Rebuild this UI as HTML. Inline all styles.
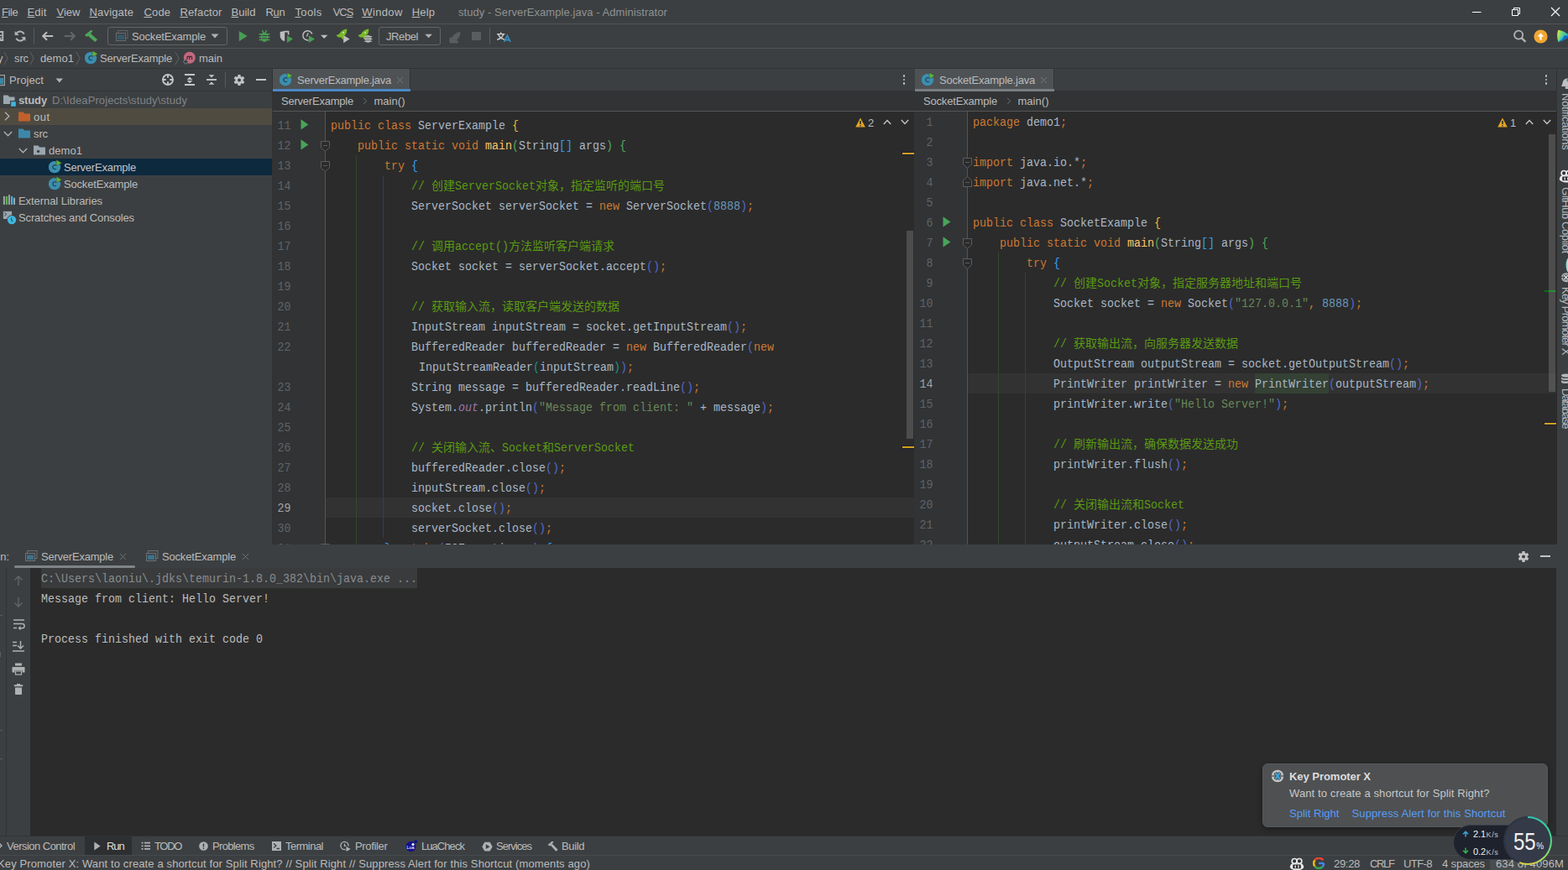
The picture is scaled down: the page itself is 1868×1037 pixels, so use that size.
<!DOCTYPE html>
<html><head><meta charset="utf-8"><title>study - ServerExample.java</title>
<style>
html,body{margin:0;padding:0;background:#3c3f41;}
body{width:1868px;height:1037px;position:relative;overflow:hidden;font-family:"Liberation Sans",sans-serif;font-size:13px;color:#bbb;}
#r{position:absolute;left:0;top:0;width:1868px;height:1037px;overflow:hidden;}
#r div,#r span,#r svg{position:absolute;white-space:pre;}
#r .cl{font-family:"Liberation Mono",monospace;font-size:13.333px;height:24px;line-height:24px;color:#a9b7c6;}
#r .cl span,#r .cl svg{position:static;}
#r .cl>span{display:inline-block;transform:scaleY(1.07);transform-origin:0 17px;}
#r .cl>span.c{transform:none}
#r .cl>span.c>span.t{display:inline-block;transform:scaleY(1.07);transform-origin:0 17px;}
#r .cl svg{display:inline-block;vertical-align:top;fill:#5a9a12;}
#r .cl span.j{display:inline-block;vertical-align:top;height:24px;line-height:22px;font-size:14px;font-family:"Liberation Mono","Noto Sans CJK SC",monospace;overflow:visible;}
.k{color:#cc7832}.s{color:#6a8759}.n{color:#6897bb}.c{color:#5a9a12}.f{color:#ffc66d}.o{color:#9876aa;font-style:italic}
.b1{color:#e8ba36}.b2{color:#54a857}.b3{color:#359ff4}.b4{color:#5468c8}.b5{color:#179387}
.sp{width:1px}
</style></head><body>
<div id="r">
<div style="left:0px;top:0px;width:1868px;height:1037px;background:#3c3f41;"></div>
<div style="left:0px;top:28px;width:1868px;height:1px;background:#515355;"></div>
<div style="left:0px;top:57px;width:1868px;height:1px;background:#515355;"></div>
<div style="left:0px;top:81px;width:1868px;height:1px;background:#323232;"></div>
<span style="left:2.0px;top:5.0px;height:20px;line-height:20px;font-size:13px;color:#bbbbbb;letter-spacing:-0.413px;"><u style="text-underline-offset:0.6px;text-decoration-thickness:1px">F</u>ile</span>
<span style="left:32.5px;top:5.0px;height:20px;line-height:20px;font-size:13px;color:#bbbbbb;letter-spacing:0.148px;"><u style="text-underline-offset:0.6px;text-decoration-thickness:1px">E</u>dit</span>
<span style="left:67.5px;top:5.0px;height:20px;line-height:20px;font-size:13px;color:#bbbbbb;letter-spacing:0.012px;"><u style="text-underline-offset:0.6px;text-decoration-thickness:1px">V</u>iew</span>
<span style="left:106.5px;top:5.0px;height:20px;line-height:20px;font-size:13px;color:#bbbbbb;letter-spacing:0.173px;"><u style="text-underline-offset:0.6px;text-decoration-thickness:1px">N</u>avigate</span>
<span style="left:171.5px;top:5.0px;height:20px;line-height:20px;font-size:13px;color:#bbbbbb;letter-spacing:0.130px;"><u style="text-underline-offset:0.6px;text-decoration-thickness:1px">C</u>ode</span>
<span style="left:214.5px;top:5.0px;height:20px;line-height:20px;font-size:13px;color:#bbbbbb;letter-spacing:0.107px;"><u style="text-underline-offset:0.6px;text-decoration-thickness:1px">R</u>efactor</span>
<span style="left:275.5px;top:5.0px;height:20px;line-height:20px;font-size:13px;color:#bbbbbb;letter-spacing:0.016px;"><u style="text-underline-offset:0.6px;text-decoration-thickness:1px">B</u>uild</span>
<span style="left:316.5px;top:5.0px;height:20px;line-height:20px;font-size:13px;color:#bbbbbb;letter-spacing:-0.286px;">R<u style="text-underline-offset:0.6px;text-decoration-thickness:1px">u</u>n</span>
<span style="left:351.5px;top:5.0px;height:20px;line-height:20px;font-size:13px;color:#bbbbbb;letter-spacing:0.328px;"><u style="text-underline-offset:0.6px;text-decoration-thickness:1px">T</u>ools</span>
<span style="left:396.7px;top:5.0px;height:20px;line-height:20px;font-size:13px;color:#bbbbbb;letter-spacing:-1.045px;">VC<u style="text-underline-offset:0.6px;text-decoration-thickness:1px">S</u></span>
<span style="left:431.3px;top:5.0px;height:20px;line-height:20px;font-size:13px;color:#bbbbbb;letter-spacing:0.358px;"><u style="text-underline-offset:0.6px;text-decoration-thickness:1px">W</u>indow</span>
<span style="left:490.7px;top:5.0px;height:20px;line-height:20px;font-size:13px;color:#bbbbbb;letter-spacing:0.212px;"><u style="text-underline-offset:0.6px;text-decoration-thickness:1px">H</u>elp</span>
<span style="left:546px;top:5.0px;height:20px;line-height:20px;font-size:13px;color:#8f9294;letter-spacing:0.062px;">study - ServerExample.java - Administrator</span>
<svg style="left:1754px;top:8px;" width="12" height="12" viewBox="0 0 12 12"><path d="M0 6.5H10.5" stroke="#ffffff" stroke-width="1" fill="none"/></svg>
<svg style="left:1800px;top:8px;" width="12" height="12" viewBox="0 0 12 12"><path d="M1.5 3.5H8.5V10.5H1.5Z M3.5 3.5V1.5H10.5V8.5H8.5" stroke="#ffffff" stroke-width="1" fill="none"/></svg>
<svg style="left:1847px;top:8px;" width="12" height="12" viewBox="0 0 12 12"><path d="M1 1L11 11M11 1L1 11" stroke="#ffffff" stroke-width="1.1" fill="none"/></svg>
<svg style="left:0px;top:36px;" width="6" height="14" viewBox="0 0 6 14"><path d="M-4 2H3.2V12H-4" fill="none" stroke="#afb1b3" stroke-width="2"/><path d="M-2 6.3H2" stroke="#afb1b3" stroke-width="1.6"/><rect x="-3" y="8.6" width="4.4" height="3.4" fill="#afb1b3"/></svg>
<svg style="left:16px;top:35px;" width="16" height="16" viewBox="0 0 16 16"><path d="M12.6 5.6A5.2 5.2 0 0 0 3.6 4.6" fill="none" stroke="#afb1b3" stroke-width="2"/><path d="M3.4 10.6A5.2 5.2 0 0 0 12.4 11.4" fill="none" stroke="#afb1b3" stroke-width="2"/><path d="M1.6 2V7H6.6Z" fill="#afb1b3"/><path d="M14.4 14V9H9.4Z" fill="#afb1b3"/></svg>
<div style="left:40px;top:33px;width:1px;height:20px;background:#595c5e;"></div>
<svg style="left:49px;top:36px;" width="15" height="14" viewBox="0 0 15 14"><path d="M14.2 7H2.4M7 2.2L2.2 7L7 11.8" fill="none" stroke="#bdbdbd" stroke-width="2"/></svg>
<svg style="left:76px;top:36px;" width="15" height="14" viewBox="0 0 15 14"><path d="M0.9 7H12.7M8.1 2.2L12.9 7L8.1 11.8" fill="none" stroke="#646667" stroke-width="2"/></svg>
<svg style="left:100px;top:35px;" width="18" height="16" viewBox="0 0 18 16"><path d="M0.9 6.8L8.3 1L10.4 1.4L9.8 2.9L3.6 8.9Z" fill="#4ea55a"/><path d="M4.6 7.4L7.4 4.6L16.1 12.3L13.2 15Z" fill="#4ea55a"/></svg>
<div style="left:127.5px;top:31.5px;width:141px;height:20px;border:1px solid #646464;border-radius:3px;box-sizing:content-box"></div>
<svg style="left:137px;top:36px;" width="16" height="14" viewBox="0 0 16 14"><rect x="3.6" y="0.5" width="11.4" height="9" fill="none" stroke="#5f6366"/><rect x="1" y="3" width="12" height="10" fill="#3c3f41"/><rect x="1.5" y="3.5" width="11" height="9" fill="#3c3f41" stroke="#676b6e"/><rect x="3" y="5.6" width="8" height="5.4" fill="#35596a"/></svg>
<span style="left:157px;top:34.0px;height:20px;line-height:20px;font-size:13px;color:#bbbbbb;letter-spacing:-0.179px;">SocketExample</span>
<svg style="left:251px;top:40px;" width="10" height="6" viewBox="0 0 10 6"><path d="M0.5 0.5H9.5L5 5.5Z" fill="#afb1b3"/></svg>
<svg style="left:284px;top:36px;" width="12" height="14" viewBox="0 0 12 14"><path d="M0.8 0.9L10.7 7L0.8 13.2Z" fill="#499c54"/></svg>
<svg style="left:307px;top:35px;" width="16" height="16" viewBox="0 0 16 16"><path d="M8 3.6C10.6 3.6 12.2 5.6 12.2 9.2C12.2 12.6 10.4 14.9 8 14.9C5.6 14.9 3.8 12.6 3.8 9.2C3.8 5.6 5.4 3.6 8 3.6Z" fill="#499c54"/><path d="M1.6 5.8H14.4M1.6 9.2H14.4M1.6 12.4H14.4" stroke="#499c54" stroke-width="1.5"/><path d="M5.4 1L7 3.8M10.6 1L9 3.8" stroke="#499c54" stroke-width="1.4"/><path d="M5 7.5H11M5 10.8H11" stroke="#3c3f41" stroke-width="1.1"/></svg>
<svg style="left:332px;top:35px;" width="18" height="17" viewBox="0 0 18 17"><path d="M1.7 3L6.5 2V14.2C4 13 1.7 11 1.7 8Z" fill="#bdbdbd"/><path d="M6.5 2.6H11.6V6.5" fill="none" stroke="#bdbdbd" stroke-width="1.6"/><path d="M6.5 2.6V13.6" stroke="#bdbdbd" stroke-width="1.4"/><path d="M10 7.2L17 11.6L10 15.9Z" fill="#499c54"/></svg>
<svg style="left:359px;top:35px;" width="18" height="17" viewBox="0 0 18 17"><path d="M12.8 5.5A5.6 5.6 0 1 0 8.5 12.8" fill="none" stroke="#bdbdbd" stroke-width="1.5"/><path d="M8.3 4.2L6.3 8.6" fill="none" stroke="#bdbdbd" stroke-width="1.3"/><path d="M8.8 7.2L16 11.6L8.8 15.9Z" fill="#499c54"/></svg>
<svg style="left:382px;top:41px;" width="9" height="6" viewBox="0 0 9 6"><path d="M0 0.8H8.4L4.2 5Z" fill="#bdbdbd"/></svg>
<svg style="left:399.5px;top:34px;" width="19" height="19" viewBox="0 0 19 19"><path d="M13.2 0.6C13.6 3.8 12.6 7.2 9.4 9.8L8.4 13.4L6.4 10.6L3.2 10.4L0.4 8.2L4.2 6.6C6.4 3 9.6 1 13.2 0.6Z" fill="#7ab929"/><circle cx="9" cy="4.8" r="0.9" fill="#e8f5d0"/><path d="M9.2 8L16.6 12.6L9.2 17.2Z" fill="#bdbdbd"/></svg>
<svg style="left:425.5px;top:34px;" width="19" height="19" viewBox="0 0 19 19"><path d="M13.2 0.6C13.6 3.8 12.6 7.2 9.4 9.8L8.4 13.4L6.4 10.6L3.2 10.4L0.4 8.2L4.2 6.6C6.4 3 9.6 1 13.2 0.6Z" fill="#7ab929"/><circle cx="9" cy="4.8" r="0.9" fill="#e8f5d0"/><ellipse cx="12.6" cy="12.4" rx="3.3" ry="4.4" fill="#bdbdbd"/><path d="M8 9.6H17.2M7.8 12.4H17.4M8 15.2H17.2" stroke="#bdbdbd" stroke-width="1.1"/><path d="M10 11H15.2M10 13.8H15.2" stroke="#3c3f41" stroke-width="0.7"/></svg>
<div style="left:450.5px;top:31.5px;width:72px;height:20.5px;border:1px solid #646464;border-radius:3px;box-sizing:content-box"></div>
<span style="left:460px;top:34.0px;height:20px;line-height:20px;font-size:13px;color:#bbbbbb;letter-spacing:-0.411px;">JRebel</span>
<svg style="left:505.5px;top:40px;" width="10" height="6" viewBox="0 0 10 6"><path d="M0.3 0.8H8.9L4.6 5.2Z" fill="#afb1b3"/></svg>
<svg style="left:533px;top:37px;" width="17" height="15" viewBox="0 0 17 15"><path transform="translate(1.5,0) scale(1.05)" d="M13.2 0.6C13.6 3.8 12.6 7.2 9.4 9.8L8.4 13.4L6.4 10.6L3.2 10.4L0.4 8.2L4.2 6.6C6.4 3 9.6 1 13.2 0.6Z" fill="#5a5d5f"/><path d="M2 10L6 8L10 10L13.5 13L12 14.4H3Z" fill="#5a5d5f"/></svg>
<div style="left:562px;top:38px;width:10.5px;height:10px;background:#5a5d5f;"></div>
<div style="left:583px;top:33px;width:1px;height:19.5px;background:#595c5e;"></div>
<svg style="left:591px;top:38px;" width="18" height="13" viewBox="0 0 18 13"><path d="M1 2.6H10.4M5.7 0.6V2.6M2.6 2.8C3.6 6 6.6 8.2 10 9.2M8.8 2.8C7.8 6 4.6 8.4 1.2 9.4" fill="none" stroke="#d0d0d0" stroke-width="1.4"/><path d="M9.6 12L13.3 4.4L17 12M10.8 9.6H15.8" fill="none" stroke="#3592c4" stroke-width="1.7"/></svg>
<svg style="left:1801px;top:34px;" width="18" height="18" viewBox="0 0 18 18"><circle cx="8.1" cy="7.6" r="5" fill="none" stroke="#afb1b3" stroke-width="1.9"/><path d="M11.6 11.2L16.4 15.8" stroke="#afb1b3" stroke-width="2.4"/></svg>
<svg style="left:1827.2px;top:34.5px;" width="17" height="17" viewBox="0 0 17 17"><circle cx="8.5" cy="8.5" r="8.1" fill="#f0a732"/><path d="M8.5 12.6V7.5" stroke="#fff" stroke-width="2.2"/><path d="M4.6 8.6L8.5 4.4L12.4 8.6Z" fill="#fff"/></svg>
<svg style="left:1855px;top:35px;" width="13" height="16" viewBox="0 0 13 16"><defs><linearGradient id="cg1" x1="0" y1="0" x2="1" y2="0.3"><stop offset="0" stop-color="#e6ee3a"/><stop offset="0.45" stop-color="#5fd08a"/><stop offset="1" stop-color="#1aa7c9"/></linearGradient></defs><path d="M1.2 0.8C5 1 11 4 15.5 7.5C11 11.5 5 14.5 1.4 15C-0.2 10 -0.2 5 1.2 0.8Z" fill="url(#cg1)"/><path d="M8.5 7.6L15.5 7.5C11 11.5 5 14.5 1.4 15Z" fill="#1667c4"/><path d="M1.4 15C2 13 5 9.5 8.5 7.6L6 12Z" fill="#22c3d6"/></svg>
<span style="left:-3px;top:60.0px;height:20px;line-height:20px;font-size:13px;color:#bbbbbb;">y</span>
<svg style="left:4.4px;top:61px;" width="8" height="17" viewBox="0 0 8 17"><path d="M0.8 0.9L5.2 8.5L0.8 16.1" fill="none" stroke="#616365" stroke-width="1"/></svg>
<span style="left:17px;top:60.0px;height:20px;line-height:20px;font-size:13px;color:#bbbbbb;letter-spacing:-0.115px;">src</span>
<svg style="left:35.4px;top:61px;" width="8" height="17" viewBox="0 0 8 17"><path d="M0.8 0.9L5.2 8.5L0.8 16.1" fill="none" stroke="#616365" stroke-width="1"/></svg>
<span style="left:48px;top:60.0px;height:20px;line-height:20px;font-size:13px;color:#bbbbbb;letter-spacing:0.050px;">demo1</span>
<svg style="left:90.2px;top:61px;" width="8" height="17" viewBox="0 0 8 17"><path d="M0.8 0.9L5.2 8.5L0.8 16.1" fill="none" stroke="#616365" stroke-width="1"/></svg>
<svg style="left:101px;top:60px;" width="17" height="17" viewBox="0 0 17 17"><circle cx="7" cy="9.1" r="7.2" fill="#3b8fb0"/><path d="M8.9 10.9A2.4 2.4 0 1 1 8.9 7.3" fill="none" stroke="#234a5e" stroke-width="1.3"/><path d="M9.2 0.6L15.6 4.2L9.2 7.8Z" fill="#5fb832" stroke="#3c3f41" stroke-width="0.5"/></svg>
<span style="left:119px;top:60.0px;height:20px;line-height:20px;font-size:13px;color:#bbbbbb;letter-spacing:-0.221px;">ServerExample</span>
<svg style="left:207.9px;top:61px;" width="8" height="17" viewBox="0 0 8 17"><path d="M0.8 0.9L5.2 8.5L0.8 16.1" fill="none" stroke="#616365" stroke-width="1"/></svg>
<svg style="left:217px;top:61px;" width="18" height="17" viewBox="0 0 18 17"><circle cx="8.8" cy="7.8" r="7" fill="#c4687e"/><path d="M6 10V6.2M6 7.4C6.6 5.8 8.6 5.8 8.8 7.2V10M8.8 7.4C9.4 5.8 11.4 5.8 11.6 7.2V10" fill="none" stroke="#3f2a31" stroke-width="1.2"/><rect x="2.2" y="10.4" width="4.2" height="4.2" transform="rotate(45 4.3 12.5)" fill="#3c3f41" stroke="#7f8d96" stroke-width="0.9"/></svg>
<span style="left:237px;top:60.0px;height:20px;line-height:20px;font-size:13px;color:#bbbbbb;letter-spacing:-0.047px;">main</span>
<div style="left:324px;top:82px;width:1px;height:568px;background:#323232;"></div>
<div style="left:0px;top:108px;width:324px;height:1px;background:#323232;"></div>
<svg style="left:0px;top:89px;" width="8" height="14" viewBox="0 0 8 14"><rect x="-4" y="0.6" width="9.4" height="12" fill="none" stroke="#9aa0a4" stroke-width="1.2"/><rect x="-2" y="4" width="6" height="7.2" fill="#3a87a6"/></svg>
<span style="left:11px;top:86.0px;height:20px;line-height:20px;font-size:13px;color:#bbbbbb;letter-spacing:0.076px;">Project</span>
<svg style="left:66px;top:93px;" width="10" height="6" viewBox="0 0 10 6"><path d="M0.5 0.5H9L4.75 5.5Z" fill="#afb1b3"/></svg>
<svg style="left:192px;top:87px;" width="16" height="16" viewBox="0 0 16 16"><circle cx="8" cy="8" r="6" fill="none" stroke="#c4c4c4" stroke-width="1.9"/><path d="M8 1.5V5.8M8 10.2V14.5M1.5 8H5.8M10.2 8H14.5" stroke="#c4c4c4" stroke-width="1.9"/></svg>
<svg style="left:219px;top:87px;" width="14" height="16" viewBox="0 0 14 16"><path d="M1 2H13M1 14H13" stroke="#c4c4c4" stroke-width="1.9"/><path d="M7 4.8L10.4 8H3.6ZM7 12.2L10.4 9H3.6Z" fill="#c4c4c4"/></svg>
<svg style="left:245px;top:87px;" width="14" height="16" viewBox="0 0 14 16"><path d="M1 8H13" stroke="#c4c4c4" stroke-width="1.9"/><path d="M7 5.4L10.4 2.2H3.6ZM7 10.6L10.4 13.8H3.6Z" fill="#c4c4c4"/></svg>
<div style="left:268px;top:86px;width:1px;height:18px;background:#5a5955;"></div>
<svg style="left:278px;top:87.5px;" width="14" height="15" viewBox="0 0 14 15"><path d="M5.32 3.11L5.52 1.07L8.48 1.07L8.68 3.11L9.96 3.85L11.83 3.00L13.31 5.57L11.64 6.76L11.64 8.24L13.31 9.43L11.83 12.00L9.96 11.15L8.68 11.89L8.48 13.93L5.52 13.93L5.32 11.89L4.04 11.15L2.17 12.00L0.69 9.43L2.36 8.24L2.36 6.76L0.69 5.57L2.17 3.00L4.04 3.85ZM9.00 7.50A2.0 2.0 0 1 0 5.00 7.50A2.0 2.0 0 1 0 9.00 7.50Z" fill="#c4c4c4" fill-rule="evenodd"/></svg>
<div style="left:305px;top:94px;width:12px;height:2px;background:#c4c4c4;"></div>
<div style="left:0px;top:129px;width:324px;height:20px;background:#4f4b41;"></div>
<div style="left:0px;top:189px;width:324px;height:20px;background:#0d293e;"></div>
<svg style="left:3px;top:111px;" width="17" height="16" viewBox="0 0 17 16"><path d="M1 2.5H6.5L8 4.5H14.5V13H1Z" fill="#9aa7b0"/><rect x="9" y="9" width="7.5" height="7" fill="#3c3f41"/><rect x="10.2" y="10.2" width="5.6" height="5.6" fill="#40b6e0"/></svg>
<span style="left:22px;top:110.0px;height:20px;line-height:20px;font-size:13px;color:#bbbbbb;font-weight:700;letter-spacing:-0.134px;">study</span>
<span style="left:62px;top:110.0px;height:20px;line-height:20px;font-size:13px;color:#808386;letter-spacing:0.102px;">D:\IdeaProjects\study\study</span>
<svg style="left:5px;top:133px;" width="7" height="11" viewBox="0 0 7 11"><path d="M1 0.8L5.8 5.5L1 10.2" fill="none" stroke="#afb1b3" stroke-width="1.3"/></svg>
<svg style="left:21.5px;top:132.5px;" width="15" height="13" viewBox="0 0 15 13"><path d="M0 0.5H5.5L7.2 2.6H14V11.6H0Z" fill="#c2602c"/></svg>
<span style="left:40px;top:130.0px;height:20px;line-height:20px;font-size:13px;color:#bbbbbb;letter-spacing:0.474px;">out</span>
<svg style="left:4px;top:155.5px;" width="11" height="7" viewBox="0 0 11 7"><path d="M0.8 1L5.5 5.8L10.2 1" fill="none" stroke="#afb1b3" stroke-width="1.3"/></svg>
<svg style="left:21.5px;top:152.5px;" width="15" height="13" viewBox="0 0 15 13"><path d="M0 0.5H5.5L7.2 2.6H14V11.6H0Z" fill="#3d88a9"/></svg>
<span style="left:40px;top:150.0px;height:20px;line-height:20px;font-size:13px;color:#bbbbbb;letter-spacing:-0.115px;">src</span>
<svg style="left:22px;top:175.5px;" width="11" height="7" viewBox="0 0 11 7"><path d="M0.8 1L5.5 5.8L10.2 1" fill="none" stroke="#afb1b3" stroke-width="1.3"/></svg>
<svg style="left:40px;top:172.5px;" width="15" height="13" viewBox="0 0 15 13"><path d="M0 0.5H5.5L7.2 2.6H14V11.6H0Z" fill="#9aa7b0"/><circle cx="5.6" cy="7.4" r="1.7" fill="#3c3f41"/></svg>
<span style="left:58px;top:170.0px;height:20px;line-height:20px;font-size:13px;color:#bbbbbb;letter-spacing:0.050px;">demo1</span>
<svg style="left:58px;top:190px;" width="17" height="17" viewBox="0 0 17 17"><circle cx="7" cy="9.1" r="7.2" fill="#3b8fb0"/><path d="M8.9 10.9A2.4 2.4 0 1 1 8.9 7.3" fill="none" stroke="#234a5e" stroke-width="1.3"/><path d="M9.2 0.6L15.6 4.2L9.2 7.8Z" fill="#5fb832" stroke="#3c3f41" stroke-width="0.5"/></svg>
<span style="left:76px;top:190.0px;height:20px;line-height:20px;font-size:13px;color:#c4c4c4;letter-spacing:-0.221px;">ServerExample</span>
<svg style="left:58px;top:210px;" width="17" height="17" viewBox="0 0 17 17"><circle cx="7" cy="9.1" r="7.2" fill="#3b8fb0"/><path d="M8.9 10.9A2.4 2.4 0 1 1 8.9 7.3" fill="none" stroke="#234a5e" stroke-width="1.3"/><path d="M9.2 0.6L15.6 4.2L9.2 7.8Z" fill="#5fb832" stroke="#3c3f41" stroke-width="0.5"/></svg>
<span style="left:76px;top:210.0px;height:20px;line-height:20px;font-size:13px;color:#bbbbbb;letter-spacing:-0.179px;">SocketExample</span>
<svg style="left:3px;top:232px;" width="16" height="13" viewBox="0 0 16 13"><rect x="0.9" y="1.9" width="2" height="10" fill="#9aa7b0"/><rect x="3.9" y="1.9" width="2.2" height="10" fill="#62b543"/><rect x="7" y="0.2" width="1.9" height="11.7" fill="#9aa7b0"/><rect x="10" y="1.9" width="2.2" height="10" fill="#40b6e0"/><rect x="13" y="3.8" width="2" height="8.1" fill="#9aa7b0"/></svg>
<span style="left:22px;top:230.0px;height:20px;line-height:20px;font-size:13px;color:#bbbbbb;letter-spacing:-0.064px;">External Libraries</span>
<svg style="left:3px;top:251px;" width="17" height="17" viewBox="0 0 17 17"><rect x="0.9" y="0.9" width="10.2" height="9.1" fill="#9aa7b0"/><path d="M2.4 2.4L4.8 4.3L2.4 6.3" fill="none" stroke="#3c3f41" stroke-width="1"/><circle cx="11" cy="11.1" r="5.9" fill="#3c3f41"/><circle cx="11" cy="11.1" r="5.2" fill="#40b6e0"/><path d="M10.6 8.6V11.4L12.4 12.9" fill="none" stroke="#2d5f73" stroke-width="1.3"/></svg>
<span style="left:22px;top:250.0px;height:20px;line-height:20px;font-size:13px;color:#bbbbbb;letter-spacing:-0.133px;">Scratches and Consoles</span>
<div style="left:325px;top:82px;width:765px;height:27px;background:#3c3f41;"></div>
<div style="left:325px;top:108px;width:765px;height:1px;background:#323232;"></div>
<div style="left:325px;top:82px;width:163px;height:24px;background:#4e5254;"></div>
<div style="left:488px;top:82px;width:1px;height:24px;background:#323232;"></div>
<div style="left:325px;top:106px;width:164px;height:3px;background:#4a88c7;"></div>
<svg style="left:333px;top:86px;" width="17" height="17" viewBox="0 0 17 17"><circle cx="7" cy="9.1" r="7.2" fill="#3b8fb0"/><path d="M8.9 10.9A2.4 2.4 0 1 1 8.9 7.3" fill="none" stroke="#234a5e" stroke-width="1.3"/><path d="M9.2 0.6L15.6 4.2L9.2 7.8Z" fill="#5fb832" stroke="#3c3f41" stroke-width="0.5"/></svg>
<span style="left:354px;top:86.0px;height:20px;line-height:20px;font-size:13px;color:#bbbbbb;letter-spacing:-0.240px;">ServerExample.java</span>
<svg style="left:472px;top:91px;" width="9" height="9" viewBox="0 0 9 9"><path d="M1 1L8 8M8 1L1 8" stroke="#74777a" stroke-width="1"/></svg>
<div style="left:1075.8px;top:89.2px;width:2.6px;height:2.6px;background:#c0c0c0;border-radius:2px"></div>
<div style="left:1075.8px;top:93.7px;width:2.6px;height:2.6px;background:#c0c0c0;border-radius:2px"></div>
<div style="left:1075.8px;top:98.2px;width:2.6px;height:2.6px;background:#c0c0c0;border-radius:2px"></div>
<div style="left:325px;top:109px;width:765px;height:24px;background:#313335;"></div>
<div style="left:325px;top:132px;width:765px;height:1px;background:#555555;"></div>
<span style="left:335px;top:111.0px;height:20px;line-height:20px;font-size:13px;color:#bbbbbb;letter-spacing:-0.221px;">ServerExample</span>
<svg style="left:432px;top:116px;" width="6" height="9" viewBox="0 0 6 9"><path d="M1 0.8L4.6 4.5L1 8.2" fill="none" stroke="#6e7173" stroke-width="1"/></svg>
<span style="left:445.5px;top:111.0px;height:20px;line-height:20px;font-size:13px;color:#bbbbbb;letter-spacing:0.026px;">main()</span>
<div style="left:325px;top:133px;width:765px;height:516px;background:#2b2b2b;"></div>
<div style="left:325px;top:133px;width:62px;height:516px;background:#313335;"></div>
<div style="left:388px;top:593px;width:701px;height:24px;background:#323232;"></div>
<div style="left:387px;top:133px;width:1px;height:516px;background:#555555;"></div>
<div style="left:424px;top:185px;width:1px;height:464px;background:#34472f;"></div>
<div style="left:456px;top:209px;width:1px;height:432px;background:#2d4154;"></div>
<span style="left:306.5px;top:138.5px;height:24px;line-height:24px;font-size:13.333px;color:#606366;font-family:'Liberation Mono', monospace;transform:scaleY(1.08);transform-origin:0 15.5px;width:40px;text-align:right;">11</span>
<div class="cl" style="left:394px;top:139px;"><span class="k">public class </span><span class="p">ServerExample </span><span class="b1">{</span></div>
<span style="left:306.5px;top:162.5px;height:24px;line-height:24px;font-size:13.333px;color:#606366;font-family:'Liberation Mono', monospace;transform:scaleY(1.08);transform-origin:0 15.5px;width:40px;text-align:right;">12</span>
<div class="cl" style="left:394px;top:163px;"><span class="p">    </span><span class="k">public static void </span><span class="f">main</span><span class="b2">(</span><span class="p">String</span><span class="b3">[]</span><span class="p"> args</span><span class="b2">)</span><span class="p"> </span><span class="b2">{</span></div>
<span style="left:306.5px;top:186.5px;height:24px;line-height:24px;font-size:13.333px;color:#606366;font-family:'Liberation Mono', monospace;transform:scaleY(1.08);transform-origin:0 15.5px;width:40px;text-align:right;">13</span>
<div class="cl" style="left:394px;top:187px;"><span class="p">        </span><span class="k">try </span><span class="b3">{</span></div>
<span style="left:306.5px;top:210.5px;height:24px;line-height:24px;font-size:13.333px;color:#606366;font-family:'Liberation Mono', monospace;transform:scaleY(1.08);transform-origin:0 15.5px;width:40px;text-align:right;">14</span>
<div class="cl" style="left:394px;top:211px;"><span class="p">            </span><span class="c"><span class="t">// </span><span class="j" style="width:28px">创建</span><span class="t">ServerSocket</span><span class="j" style="width:154px">对象，指定监听的端口号</span></span></div>
<span style="left:306.5px;top:234.5px;height:24px;line-height:24px;font-size:13.333px;color:#606366;font-family:'Liberation Mono', monospace;transform:scaleY(1.08);transform-origin:0 15.5px;width:40px;text-align:right;">15</span>
<div class="cl" style="left:394px;top:235px;"><span class="p">            ServerSocket serverSocket = </span><span class="k">new </span><span class="p">ServerSocket</span><span class="b4">(</span><span class="n">8888</span><span class="b4">)</span><span class="k">;</span></div>
<span style="left:306.5px;top:258.5px;height:24px;line-height:24px;font-size:13.333px;color:#606366;font-family:'Liberation Mono', monospace;transform:scaleY(1.08);transform-origin:0 15.5px;width:40px;text-align:right;">16</span>
<span style="left:306.5px;top:282.5px;height:24px;line-height:24px;font-size:13.333px;color:#606366;font-family:'Liberation Mono', monospace;transform:scaleY(1.08);transform-origin:0 15.5px;width:40px;text-align:right;">17</span>
<div class="cl" style="left:394px;top:283px;"><span class="p">            </span><span class="c"><span class="t">// </span><span class="j" style="width:28px">调用</span><span class="t">accept()</span><span class="j" style="width:126px">方法监听客户端请求</span></span></div>
<span style="left:306.5px;top:306.5px;height:24px;line-height:24px;font-size:13.333px;color:#606366;font-family:'Liberation Mono', monospace;transform:scaleY(1.08);transform-origin:0 15.5px;width:40px;text-align:right;">18</span>
<div class="cl" style="left:394px;top:307px;"><span class="p">            Socket socket = serverSocket.accept</span><span class="b4">()</span><span class="k">;</span></div>
<span style="left:306.5px;top:330.5px;height:24px;line-height:24px;font-size:13.333px;color:#606366;font-family:'Liberation Mono', monospace;transform:scaleY(1.08);transform-origin:0 15.5px;width:40px;text-align:right;">19</span>
<span style="left:306.5px;top:354.5px;height:24px;line-height:24px;font-size:13.333px;color:#606366;font-family:'Liberation Mono', monospace;transform:scaleY(1.08);transform-origin:0 15.5px;width:40px;text-align:right;">20</span>
<div class="cl" style="left:394px;top:355px;"><span class="p">            </span><span class="c"><span class="t">// </span><span class="j" style="width:224px">获取输入流，读取客户端发送的数据</span></span></div>
<span style="left:306.5px;top:378.5px;height:24px;line-height:24px;font-size:13.333px;color:#606366;font-family:'Liberation Mono', monospace;transform:scaleY(1.08);transform-origin:0 15.5px;width:40px;text-align:right;">21</span>
<div class="cl" style="left:394px;top:379px;"><span class="p">            InputStream inputStream = socket.getInputStream</span><span class="b4">()</span><span class="k">;</span></div>
<span style="left:306.5px;top:402.5px;height:24px;line-height:24px;font-size:13.333px;color:#606366;font-family:'Liberation Mono', monospace;transform:scaleY(1.08);transform-origin:0 15.5px;width:40px;text-align:right;">22</span>
<div class="cl" style="left:394px;top:403px;"><span class="p">            BufferedReader bufferedReader = </span><span class="k">new </span><span class="p">BufferedReader</span><span class="b4">(</span><span class="k">new</span></div>
<div class="cl" style="left:394px;top:427px;"><span class="p">             </span><span class="sp"></span><span class="p">InputStreamReader</span><span class="b5">(</span><span class="p">inputStream</span><span class="b5">)</span><span class="b4">)</span><span class="k">;</span></div>
<span style="left:306.5px;top:450.5px;height:24px;line-height:24px;font-size:13.333px;color:#606366;font-family:'Liberation Mono', monospace;transform:scaleY(1.08);transform-origin:0 15.5px;width:40px;text-align:right;">23</span>
<div class="cl" style="left:394px;top:451px;"><span class="p">            String message = bufferedReader.readLine</span><span class="b4">()</span><span class="k">;</span></div>
<span style="left:306.5px;top:474.5px;height:24px;line-height:24px;font-size:13.333px;color:#606366;font-family:'Liberation Mono', monospace;transform:scaleY(1.08);transform-origin:0 15.5px;width:40px;text-align:right;">24</span>
<div class="cl" style="left:394px;top:475px;"><span class="p">            System.</span><span class="o">out</span><span class="p">.println</span><span class="b4">(</span><span class="s">"Message from client: "</span><span class="p"> + message</span><span class="b4">)</span><span class="k">;</span></div>
<span style="left:306.5px;top:498.5px;height:24px;line-height:24px;font-size:13.333px;color:#606366;font-family:'Liberation Mono', monospace;transform:scaleY(1.08);transform-origin:0 15.5px;width:40px;text-align:right;">25</span>
<span style="left:306.5px;top:522.5px;height:24px;line-height:24px;font-size:13.333px;color:#606366;font-family:'Liberation Mono', monospace;transform:scaleY(1.08);transform-origin:0 15.5px;width:40px;text-align:right;">26</span>
<div class="cl" style="left:394px;top:523px;"><span class="p">            </span><span class="c"><span class="t">// </span><span class="j" style="width:84px">关闭输入流、</span><span class="t">Socket</span><span class="j" style="width:14px">和</span><span class="t">ServerSocket</span></span></div>
<span style="left:306.5px;top:546.5px;height:24px;line-height:24px;font-size:13.333px;color:#606366;font-family:'Liberation Mono', monospace;transform:scaleY(1.08);transform-origin:0 15.5px;width:40px;text-align:right;">27</span>
<div class="cl" style="left:394px;top:547px;"><span class="p">            bufferedReader.close</span><span class="b4">()</span><span class="k">;</span></div>
<span style="left:306.5px;top:570.5px;height:24px;line-height:24px;font-size:13.333px;color:#606366;font-family:'Liberation Mono', monospace;transform:scaleY(1.08);transform-origin:0 15.5px;width:40px;text-align:right;">28</span>
<div class="cl" style="left:394px;top:571px;"><span class="p">            inputStream.close</span><span class="b4">()</span><span class="k">;</span></div>
<span style="left:306.5px;top:594.5px;height:24px;line-height:24px;font-size:13.333px;color:#a4a3a3;font-family:'Liberation Mono', monospace;transform:scaleY(1.08);transform-origin:0 15.5px;width:40px;text-align:right;">29</span>
<div class="cl" style="left:394px;top:595px;"><span class="p">            socket.close</span><span class="b4">()</span><span class="k">;</span></div>
<span style="left:306.5px;top:618.5px;height:24px;line-height:24px;font-size:13.333px;color:#606366;font-family:'Liberation Mono', monospace;transform:scaleY(1.08);transform-origin:0 15.5px;width:40px;text-align:right;">30</span>
<div class="cl" style="left:394px;top:619px;"><span class="p">            serverSocket.close</span><span class="b4">()</span><span class="k">;</span></div>
<span style="left:306.5px;top:642.5px;height:24px;line-height:24px;font-size:13.333px;color:#606366;font-family:'Liberation Mono', monospace;transform:scaleY(1.08);transform-origin:0 15.5px;width:40px;text-align:right;">31</span>
<div class="cl" style="left:394px;top:643px;"><span class="p">        </span><span class="b3">}</span><span class="p"> </span><span class="k">catch </span><span class="b4">(</span><span class="p">IOException e</span><span class="b4">)</span><span class="p"> </span><span class="b3">{</span></div>
<svg style="left:382.0px;top:168px;" width="11" height="13" viewBox="0 0 11 13"><path d="M0.5 0.5H10.5V8L5.5 12.3L0.5 8Z" fill="#2b2b2b" stroke="#5a5c5e" stroke-width="1"/><path d="M3 5.5H8" stroke="#5a5c5e" stroke-width="1"/></svg>
<svg style="left:382.0px;top:192px;" width="11" height="13" viewBox="0 0 11 13"><path d="M0.5 0.5H10.5V8L5.5 12.3L0.5 8Z" fill="#2b2b2b" stroke="#5a5c5e" stroke-width="1"/><path d="M3 5.5H8" stroke="#5a5c5e" stroke-width="1"/></svg>
<svg style="left:382.0px;top:648px;" width="11" height="13" viewBox="0 0 11 13"><path d="M0.5 0.5H10.5V8L5.5 12.3L0.5 8Z" fill="#2b2b2b" stroke="#5a5c5e" stroke-width="1"/><path d="M3 5.5H8" stroke="#5a5c5e" stroke-width="1"/></svg>
<svg style="left:357.5px;top:142px;" width="10" height="13" viewBox="0 0 10 13"><path d="M0.5 0.3L9.4 6.45L0.5 12.6Z" fill="#4aa35a"/></svg>
<svg style="left:357.5px;top:166px;" width="10" height="13" viewBox="0 0 10 13"><path d="M0.5 0.3L9.4 6.45L0.5 12.6Z" fill="#4aa35a"/></svg>
<div style="left:1074px;top:181px;width:16px;height:4px;background:#1f2130;"></div>
<div style="left:1075px;top:182px;width:14px;height:2px;background:#d3a11b;"></div>
<div style="left:1074px;top:531px;width:16px;height:4px;background:#1f2130;"></div>
<div style="left:1075px;top:532px;width:14px;height:2px;background:#d3a11b;"></div>
<div style="left:1080px;top:275px;width:8px;height:248px;background:rgba(255,255,255,0.16);"></div>
<svg style="left:1019px;top:140px;" width="12" height="12" viewBox="0 0 12 12"><path d="M6 0.5L11.8 11.5H0.2Z" fill="#e2a525"/><path d="M6 4V8M6 9.2V10.6" stroke="#2b2b2b" stroke-width="1.6"/></svg>
<span style="left:1034px;top:136.5px;height:20px;line-height:20px;font-size:13px;color:#bbbbbb;">2</span>
<svg style="left:1052px;top:142.2px;" width="10" height="7" viewBox="0 0 10 7"><path d="M0.8 6L5 1.5L9.2 6" fill="none" stroke="#c4c4c4" stroke-width="1.4"/></svg>
<svg style="left:1073px;top:142.2px;" width="10" height="7" viewBox="0 0 10 7"><path d="M0.8 1L5 5.5L9.2 1" fill="none" stroke="#c4c4c4" stroke-width="1.4"/></svg>
<div style="left:1090px;top:82px;width:765px;height:27px;background:#3c3f41;"></div>
<div style="left:1090px;top:108px;width:765px;height:1px;background:#323232;"></div>
<div style="left:1090px;top:82px;width:165px;height:24px;background:#4e5254;"></div>
<div style="left:1255px;top:82px;width:1px;height:24px;background:#323232;"></div>
<div style="left:1090px;top:106px;width:166px;height:3px;background:#7a7e81;"></div>
<svg style="left:1098px;top:86px;" width="17" height="17" viewBox="0 0 17 17"><circle cx="7" cy="9.1" r="7.2" fill="#3b8fb0"/><path d="M8.9 10.9A2.4 2.4 0 1 1 8.9 7.3" fill="none" stroke="#234a5e" stroke-width="1.3"/><path d="M9.2 0.6L15.6 4.2L9.2 7.8Z" fill="#5fb832" stroke="#3c3f41" stroke-width="0.5"/></svg>
<span style="left:1119px;top:86.0px;height:20px;line-height:20px;font-size:13px;color:#bbbbbb;letter-spacing:-0.210px;">SocketExample.java</span>
<svg style="left:1239px;top:91px;" width="9" height="9" viewBox="0 0 9 9"><path d="M1 1L8 8M8 1L1 8" stroke="#74777a" stroke-width="1"/></svg>
<div style="left:1840.8px;top:89.2px;width:2.6px;height:2.6px;background:#c0c0c0;border-radius:2px"></div>
<div style="left:1840.8px;top:93.7px;width:2.6px;height:2.6px;background:#c0c0c0;border-radius:2px"></div>
<div style="left:1840.8px;top:98.2px;width:2.6px;height:2.6px;background:#c0c0c0;border-radius:2px"></div>
<div style="left:1090px;top:109px;width:765px;height:24px;background:#313335;"></div>
<div style="left:1090px;top:132px;width:765px;height:1px;background:#555555;"></div>
<span style="left:1100px;top:111.0px;height:20px;line-height:20px;font-size:13px;color:#bbbbbb;letter-spacing:-0.179px;">SocketExample</span>
<svg style="left:1199px;top:116px;" width="6" height="9" viewBox="0 0 6 9"><path d="M1 0.8L4.6 4.5L1 8.2" fill="none" stroke="#6e7173" stroke-width="1"/></svg>
<span style="left:1212.5px;top:111.0px;height:20px;line-height:20px;font-size:13px;color:#bbbbbb;letter-spacing:0.026px;">main()</span>
<div style="left:1090px;top:133px;width:765px;height:516px;background:#2b2b2b;"></div>
<div style="left:1090px;top:133px;width:62px;height:516px;background:#313335;"></div>
<div style="left:1153px;top:445px;width:701px;height:24px;background:#323232;"></div>
<div style="left:1495px;top:445px;width:88px;height:24px;background:#344134;"></div>
<div style="left:1152px;top:133px;width:1px;height:516px;background:#555555;"></div>
<div style="left:1189px;top:301px;width:1px;height:348px;background:#34472f;"></div>
<div style="left:1221px;top:325px;width:1px;height:324px;background:#2d4154;"></div>
<span style="left:1071.5px;top:134.5px;height:24px;line-height:24px;font-size:13.333px;color:#606366;font-family:'Liberation Mono', monospace;transform:scaleY(1.08);transform-origin:0 15.5px;width:40px;text-align:right;">1</span>
<div class="cl" style="left:1159px;top:135px;"><span class="k">package </span><span class="p">demo1</span><span class="k">;</span></div>
<span style="left:1071.5px;top:158.5px;height:24px;line-height:24px;font-size:13.333px;color:#606366;font-family:'Liberation Mono', monospace;transform:scaleY(1.08);transform-origin:0 15.5px;width:40px;text-align:right;">2</span>
<span style="left:1071.5px;top:182.5px;height:24px;line-height:24px;font-size:13.333px;color:#606366;font-family:'Liberation Mono', monospace;transform:scaleY(1.08);transform-origin:0 15.5px;width:40px;text-align:right;">3</span>
<div class="cl" style="left:1159px;top:183px;"><span class="k">import </span><span class="p">java.io.*</span><span class="k">;</span></div>
<span style="left:1071.5px;top:206.5px;height:24px;line-height:24px;font-size:13.333px;color:#606366;font-family:'Liberation Mono', monospace;transform:scaleY(1.08);transform-origin:0 15.5px;width:40px;text-align:right;">4</span>
<div class="cl" style="left:1159px;top:207px;"><span class="k">import </span><span class="p">java.net.*</span><span class="k">;</span></div>
<span style="left:1071.5px;top:230.5px;height:24px;line-height:24px;font-size:13.333px;color:#606366;font-family:'Liberation Mono', monospace;transform:scaleY(1.08);transform-origin:0 15.5px;width:40px;text-align:right;">5</span>
<span style="left:1071.5px;top:254.5px;height:24px;line-height:24px;font-size:13.333px;color:#606366;font-family:'Liberation Mono', monospace;transform:scaleY(1.08);transform-origin:0 15.5px;width:40px;text-align:right;">6</span>
<div class="cl" style="left:1159px;top:255px;"><span class="k">public class </span><span class="p">SocketExample </span><span class="b1">{</span></div>
<span style="left:1071.5px;top:278.5px;height:24px;line-height:24px;font-size:13.333px;color:#606366;font-family:'Liberation Mono', monospace;transform:scaleY(1.08);transform-origin:0 15.5px;width:40px;text-align:right;">7</span>
<div class="cl" style="left:1159px;top:279px;"><span class="p">    </span><span class="k">public static void </span><span class="f">main</span><span class="b2">(</span><span class="p">String</span><span class="b3">[]</span><span class="p"> args</span><span class="b2">)</span><span class="p"> </span><span class="b2">{</span></div>
<span style="left:1071.5px;top:302.5px;height:24px;line-height:24px;font-size:13.333px;color:#606366;font-family:'Liberation Mono', monospace;transform:scaleY(1.08);transform-origin:0 15.5px;width:40px;text-align:right;">8</span>
<div class="cl" style="left:1159px;top:303px;"><span class="p">        </span><span class="k">try </span><span class="b3">{</span></div>
<span style="left:1071.5px;top:326.5px;height:24px;line-height:24px;font-size:13.333px;color:#606366;font-family:'Liberation Mono', monospace;transform:scaleY(1.08);transform-origin:0 15.5px;width:40px;text-align:right;">9</span>
<div class="cl" style="left:1159px;top:327px;"><span class="p">            </span><span class="c"><span class="t">// </span><span class="j" style="width:28px">创建</span><span class="t">Socket</span><span class="j" style="width:196px">对象，指定服务器地址和端口号</span></span></div>
<span style="left:1071.5px;top:350.5px;height:24px;line-height:24px;font-size:13.333px;color:#606366;font-family:'Liberation Mono', monospace;transform:scaleY(1.08);transform-origin:0 15.5px;width:40px;text-align:right;">10</span>
<div class="cl" style="left:1159px;top:351px;"><span class="p">            Socket socket = </span><span class="k">new </span><span class="p">Socket</span><span class="b4">(</span><span class="s">"127.0.0.1"</span><span class="k">,</span><span class="p"> </span><span class="n">8888</span><span class="b4">)</span><span class="k">;</span></div>
<span style="left:1071.5px;top:374.5px;height:24px;line-height:24px;font-size:13.333px;color:#606366;font-family:'Liberation Mono', monospace;transform:scaleY(1.08);transform-origin:0 15.5px;width:40px;text-align:right;">11</span>
<span style="left:1071.5px;top:398.5px;height:24px;line-height:24px;font-size:13.333px;color:#606366;font-family:'Liberation Mono', monospace;transform:scaleY(1.08);transform-origin:0 15.5px;width:40px;text-align:right;">12</span>
<div class="cl" style="left:1159px;top:399px;"><span class="p">            </span><span class="c"><span class="t">// </span><span class="j" style="width:196px">获取输出流，向服务器发送数据</span></span></div>
<span style="left:1071.5px;top:422.5px;height:24px;line-height:24px;font-size:13.333px;color:#606366;font-family:'Liberation Mono', monospace;transform:scaleY(1.08);transform-origin:0 15.5px;width:40px;text-align:right;">13</span>
<div class="cl" style="left:1159px;top:423px;"><span class="p">            OutputStream outputStream = socket.getOutputStream</span><span class="b4">()</span><span class="k">;</span></div>
<span style="left:1071.5px;top:446.5px;height:24px;line-height:24px;font-size:13.333px;color:#a4a3a3;font-family:'Liberation Mono', monospace;transform:scaleY(1.08);transform-origin:0 15.5px;width:40px;text-align:right;">14</span>
<div class="cl" style="left:1159px;top:447px;"><span class="p">            PrintWriter printWriter = </span><span class="k">new </span><span class="hl">PrintWriter</span><span class="b4">(</span><span class="p">outputStream</span><span class="b4">)</span><span class="k">;</span></div>
<span style="left:1071.5px;top:470.5px;height:24px;line-height:24px;font-size:13.333px;color:#606366;font-family:'Liberation Mono', monospace;transform:scaleY(1.08);transform-origin:0 15.5px;width:40px;text-align:right;">15</span>
<div class="cl" style="left:1159px;top:471px;"><span class="p">            printWriter.write</span><span class="b4">(</span><span class="s">"Hello Server!"</span><span class="b4">)</span><span class="k">;</span></div>
<span style="left:1071.5px;top:494.5px;height:24px;line-height:24px;font-size:13.333px;color:#606366;font-family:'Liberation Mono', monospace;transform:scaleY(1.08);transform-origin:0 15.5px;width:40px;text-align:right;">16</span>
<span style="left:1071.5px;top:518.5px;height:24px;line-height:24px;font-size:13.333px;color:#606366;font-family:'Liberation Mono', monospace;transform:scaleY(1.08);transform-origin:0 15.5px;width:40px;text-align:right;">17</span>
<div class="cl" style="left:1159px;top:519px;"><span class="p">            </span><span class="c"><span class="t">// </span><span class="j" style="width:196px">刷新输出流，确保数据发送成功</span></span></div>
<span style="left:1071.5px;top:542.5px;height:24px;line-height:24px;font-size:13.333px;color:#606366;font-family:'Liberation Mono', monospace;transform:scaleY(1.08);transform-origin:0 15.5px;width:40px;text-align:right;">18</span>
<div class="cl" style="left:1159px;top:543px;"><span class="p">            printWriter.flush</span><span class="b4">()</span><span class="k">;</span></div>
<span style="left:1071.5px;top:566.5px;height:24px;line-height:24px;font-size:13.333px;color:#606366;font-family:'Liberation Mono', monospace;transform:scaleY(1.08);transform-origin:0 15.5px;width:40px;text-align:right;">19</span>
<span style="left:1071.5px;top:590.5px;height:24px;line-height:24px;font-size:13.333px;color:#606366;font-family:'Liberation Mono', monospace;transform:scaleY(1.08);transform-origin:0 15.5px;width:40px;text-align:right;">20</span>
<div class="cl" style="left:1159px;top:591px;"><span class="p">            </span><span class="c"><span class="t">// </span><span class="j" style="width:84px">关闭输出流和</span><span class="t">Socket</span></span></div>
<span style="left:1071.5px;top:614.5px;height:24px;line-height:24px;font-size:13.333px;color:#606366;font-family:'Liberation Mono', monospace;transform:scaleY(1.08);transform-origin:0 15.5px;width:40px;text-align:right;">21</span>
<div class="cl" style="left:1159px;top:615px;"><span class="p">            printWriter.close</span><span class="b4">()</span><span class="k">;</span></div>
<span style="left:1071.5px;top:638.5px;height:24px;line-height:24px;font-size:13.333px;color:#606366;font-family:'Liberation Mono', monospace;transform:scaleY(1.08);transform-origin:0 15.5px;width:40px;text-align:right;">22</span>
<div class="cl" style="left:1159px;top:639px;"><span class="p">            outputStream.close</span><span class="b4">()</span><span class="k">;</span></div>
<svg style="left:1147.0px;top:188px;" width="11" height="13" viewBox="0 0 11 13"><path d="M0.5 0.5H10.5V8L5.5 12.3L0.5 8Z" fill="#2b2b2b" stroke="#5a5c5e" stroke-width="1"/><path d="M3 5.5H8" stroke="#5a5c5e" stroke-width="1"/></svg>
<svg style="left:1147.0px;top:209.5px;" width="11" height="13" viewBox="0 0 11 13"><path d="M0.5 12.5H10.5V5L5.5 0.7L0.5 5Z" fill="#2b2b2b" stroke="#5a5c5e" stroke-width="1"/><path d="M3 7.5H8" stroke="#5a5c5e" stroke-width="1"/></svg>
<svg style="left:1147.0px;top:284px;" width="11" height="13" viewBox="0 0 11 13"><path d="M0.5 0.5H10.5V8L5.5 12.3L0.5 8Z" fill="#2b2b2b" stroke="#5a5c5e" stroke-width="1"/><path d="M3 5.5H8" stroke="#5a5c5e" stroke-width="1"/></svg>
<svg style="left:1147.0px;top:308px;" width="11" height="13" viewBox="0 0 11 13"><path d="M0.5 0.5H10.5V8L5.5 12.3L0.5 8Z" fill="#2b2b2b" stroke="#5a5c5e" stroke-width="1"/><path d="M3 5.5H8" stroke="#5a5c5e" stroke-width="1"/></svg>
<svg style="left:1122.5px;top:258px;" width="10" height="13" viewBox="0 0 10 13"><path d="M0.5 0.3L9.4 6.45L0.5 12.6Z" fill="#4aa35a"/></svg>
<svg style="left:1122.5px;top:282px;" width="10" height="13" viewBox="0 0 10 13"><path d="M0.5 0.3L9.4 6.45L0.5 12.6Z" fill="#4aa35a"/></svg>
<div style="left:1840px;top:346px;width:14px;height:2px;background:#00730a;"></div>
<div style="left:1839px;top:503px;width:16px;height:4px;background:#1f2130;"></div>
<div style="left:1840px;top:504px;width:14px;height:2px;background:#d3a11b;"></div>
<div style="left:1845px;top:160px;width:8px;height:307px;background:rgba(255,255,255,0.16);"></div>
<svg style="left:1784px;top:140px;" width="12" height="12" viewBox="0 0 12 12"><path d="M6 0.5L11.8 11.5H0.2Z" fill="#e2a525"/><path d="M6 4V8M6 9.2V10.6" stroke="#2b2b2b" stroke-width="1.6"/></svg>
<span style="left:1799px;top:136.5px;height:20px;line-height:20px;font-size:13px;color:#bbbbbb;">1</span>
<svg style="left:1817px;top:142.2px;" width="10" height="7" viewBox="0 0 10 7"><path d="M0.8 6L5 1.5L9.2 6" fill="none" stroke="#c4c4c4" stroke-width="1.4"/></svg>
<svg style="left:1838px;top:142.2px;" width="10" height="7" viewBox="0 0 10 7"><path d="M0.8 1L5 5.5L9.2 1" fill="none" stroke="#c4c4c4" stroke-width="1.4"/></svg>
<div style="left:1089px;top:133px;width:1px;height:516px;background:#313335;"></div>
<div style="left:0px;top:649px;width:1854px;height:28px;background:#3c3f41;"></div>
<span style="left:0.3px;top:654.0px;height:20px;line-height:20px;font-size:13px;color:#bbbbbb;">n:</span>
<svg style="left:30px;top:656px;" width="15" height="13" viewBox="0 0 15 13"><rect x="2.6" y="0.5" width="11.4" height="9" fill="none" stroke="#6c7073"/><rect x="0" y="3" width="12" height="10" fill="#3c3f41"/><rect x="0.5" y="3.5" width="11" height="9" fill="#3c3f41" stroke="#6f7376"/><rect x="2" y="5.6" width="8" height="5.4" fill="#3d7189"/></svg>
<span style="left:49px;top:654.0px;height:20px;line-height:20px;font-size:13px;color:#bbbbbb;letter-spacing:-0.221px;">ServerExample</span>
<svg style="left:142px;top:659px;" width="9" height="9" viewBox="0 0 9 9"><path d="M1 1L8 8M8 1L1 8" stroke="#6e7173" stroke-width="1"/></svg>
<div style="left:17px;top:674px;width:144px;height:3px;background:#7f8487;border-radius:1.5px"></div>
<svg style="left:174px;top:656px;" width="15" height="13" viewBox="0 0 15 13"><rect x="2.6" y="0.5" width="11.4" height="9" fill="none" stroke="#6c7073"/><rect x="0" y="3" width="12" height="10" fill="#3c3f41"/><rect x="0.5" y="3.5" width="11" height="9" fill="#3c3f41" stroke="#6f7376"/><rect x="2" y="5.6" width="8" height="5.4" fill="#3d7189"/></svg>
<span style="left:193px;top:654.0px;height:20px;line-height:20px;font-size:13px;color:#bbbbbb;letter-spacing:-0.179px;">SocketExample</span>
<svg style="left:288px;top:659px;" width="9" height="9" viewBox="0 0 9 9"><path d="M1 1L8 8M8 1L1 8" stroke="#6e7173" stroke-width="1"/></svg>
<svg style="left:1808px;top:655.5px;" width="14" height="15" viewBox="0 0 14 15"><path d="M5.32 3.11L5.52 1.07L8.48 1.07L8.68 3.11L9.96 3.85L11.83 3.00L13.31 5.57L11.64 6.76L11.64 8.24L13.31 9.43L11.83 12.00L9.96 11.15L8.68 11.89L8.48 13.93L5.52 13.93L5.32 11.89L4.04 11.15L2.17 12.00L0.69 9.43L2.36 8.24L2.36 6.76L0.69 5.57L2.17 3.00L4.04 3.85ZM9.00 7.50A2.0 2.0 0 1 0 5.00 7.50A2.0 2.0 0 1 0 9.00 7.50Z" fill="#c4c4c4" fill-rule="evenodd"/></svg>
<div style="left:1835px;top:662px;width:12px;height:2px;background:#c4c4c4;"></div>
<div style="left:0px;top:677px;width:1854px;height:319px;background:#2b2b2b;"></div>
<div style="left:0px;top:677px;width:36px;height:319px;background:#3c3f41;"></div>
<div style="left:0px;top:777px;width:1.2px;height:6px;background:#5a5d5f;"></div>
<div style="left:7px;top:677px;width:1px;height:319px;background:#323232;"></div>
<div style="left:0px;top:733px;width:3px;height:1px;background:#595c5e;"></div>
<div style="left:0px;top:870px;width:3px;height:1px;background:#595c5e;"></div>
<div style="left:0px;top:904px;width:3px;height:1px;background:#595c5e;"></div>
<div style="left:49px;top:677px;width:448px;height:24px;background:#393b3d;"></div>
<span style="left:49px;top:678.5px;height:24px;line-height:24px;font-size:13.333px;color:#8a8c8e;font-family:'Liberation Mono', monospace;transform:scaleY(1.08);transform-origin:0 15.5px;">C:\Users\laoniu\.jdks\temurin-1.8.0_382\bin\java.exe ...</span>
<span style="left:49px;top:702.5px;height:24px;line-height:24px;font-size:13.333px;color:#bbbbbb;font-family:'Liberation Mono', monospace;transform:scaleY(1.08);transform-origin:0 15.5px;">Message from client: Hello Server!</span>
<span style="left:49px;top:750.5px;height:24px;line-height:24px;font-size:13.333px;color:#bbbbbb;font-family:'Liberation Mono', monospace;transform:scaleY(1.08);transform-origin:0 15.5px;">Process finished with exit code 0</span>
<svg style="left:15px;top:685px;" width="14" height="14" viewBox="0 0 14 14"><path d="M7 13V2M2.5 6.5L7 2L11.5 6.5" fill="none" stroke="#5f6162" stroke-width="1.6"/></svg>
<svg style="left:15px;top:711px;" width="14" height="14" viewBox="0 0 14 14"><path d="M7 1V12M2.5 7.5L7 12L11.5 7.5" fill="none" stroke="#5f6162" stroke-width="1.6"/></svg>
<svg style="left:14.8px;top:737.2px;" width="16" height="14" viewBox="0 0 16 14"><path d="M1 2H14M1 6.5H11.5A2.6 2.6 0 0 1 11.5 11.7H8M1 11.5H5" fill="none" stroke="#afb1b3" stroke-width="1.5"/><path d="M9.5 9L6.5 11.7L9.5 14.4Z" fill="#afb1b3"/></svg>
<svg style="left:14px;top:763px;" width="16" height="15" viewBox="0 0 16 15"><path d="M1 2.5H6M1 6.5H6M1 13H15" fill="none" stroke="#afb1b3" stroke-width="1.5"/><path d="M10.5 1V10M7 6.5L10.5 10L14 6.5" fill="none" stroke="#afb1b3" stroke-width="1.5"/></svg>
<svg style="left:14px;top:789.7px;" width="16" height="15" viewBox="0 0 16 15"><rect x="4" y="0.5" width="8" height="3" fill="#afb1b3"/><path d="M0.5 5H15.5V11.5H12.5V9H3.5V11.5H0.5Z" fill="#afb1b3"/><rect x="4.5" y="10" width="7" height="4" fill="none" stroke="#afb1b3" stroke-width="1.2"/></svg>
<svg style="left:15px;top:814px;" width="14" height="16" viewBox="0 0 14 16"><path d="M5 1H9V2.2H12.2V4.2H1.8V2.2H5Z" fill="#afb1b3"/><path d="M3 5.4H11V13C11 13.6 10.6 14 10 14H4C3.4 14 3 13.6 3 13Z" fill="#afb1b3"/></svg>
<div style="left:1855px;top:82px;width:13px;height:914px;background:#3c3f41;"></div>
<div style="left:1854px;top:82px;width:1px;height:51px;background:#323232;"></div>
<span style="left:1873.2px;top:110.8px;height:16px;line-height:16px;font-size:13px;color:#bbbbbb;transform-origin:0 0;transform:rotate(90deg);letter-spacing:-0.255px;">Notifications</span>
<span style="left:1873.2px;top:222.6px;height:16px;line-height:16px;font-size:13px;color:#bbbbbb;transform-origin:0 0;transform:rotate(90deg);letter-spacing:-0.425px;">GitHub Copilot</span>
<span style="left:1873.2px;top:341.5px;height:16px;line-height:16px;font-size:13px;color:#bbbbbb;transform-origin:0 0;transform:rotate(90deg);letter-spacing:-0.790px;">Key Promoter X</span>
<span style="left:1873.2px;top:462.7px;height:16px;line-height:16px;font-size:13px;color:#bbbbbb;transform-origin:0 0;transform:rotate(90deg);letter-spacing:-1.007px;">Database</span>
<svg style="left:1858px;top:92px;" width="10" height="15" viewBox="0 0 10 15"><path d="M1.8 11C3.6 9.6 3 5.4 5 3.4C6.2 2.2 7.6 1.5 8.6 1.5H12V11Z" fill="#c0c0c0"/><ellipse cx="8.6" cy="12.4" rx="2.1" ry="1.5" fill="#c0c0c0"/><circle cx="10.4" cy="3.4" r="2" fill="#3592c4"/></svg>
<svg style="left:1856.6px;top:202px;" width="12" height="16" viewBox="0 0 12 16"><path d="M3 7.5C1.5 8.5 0.8 10 0.8 12C2 14 6 15.6 9 15.6C12 15.6 16 14 17.2 12C17.2 10 16.5 8.5 15 7.5Z" fill="#eaeaea"/><circle cx="6.1" cy="4.4" r="2.9" fill="#303234" stroke="#eaeaea" stroke-width="1.7"/><circle cx="11.9" cy="4.4" r="2.9" fill="#303234" stroke="#eaeaea" stroke-width="1.7"/><rect x="4.2" y="8.4" width="9.6" height="4.8" rx="1" fill="#2c2e30"/><path d="M7.2 9.6V12.6M10.8 9.6V12.6" stroke="#eaeaea" stroke-width="1.4"/></svg>
<svg style="left:1859px;top:324px;" width="9" height="13" viewBox="0 0 9 13"><circle cx="6.6" cy="6.7" r="5.5" fill="#b4b6b8"/><path d="M0 6.7H12" stroke="#3c3f41" stroke-width="1.1"/><path d="M4 3.8L9.2 9.6M9.2 3.8L4 9.6" stroke="#3c3f41" stroke-width="3"/><path d="M4.2 4L9 9.4M9 4L4.2 9.4" stroke="#e8e8e8" stroke-width="1.3"/></svg>
<svg style="left:1859px;top:445px;" width="9" height="13" viewBox="0 0 9 13"><ellipse cx="6.5" cy="2.6" rx="5.5" ry="2.1" fill="#b4b6b8"/><path d="M1 4.4C2 6.4 11 6.4 12 4.4V6.6C11 8.6 2 8.6 1 6.6ZM1 8C2 10 11 10 12 8V10.4C11 12.4 2 12.4 1 10.4Z" fill="#b4b6b8"/></svg>
<svg style="left:1865px;top:308px;" width="3" height="18" viewBox="0 0 3 18"><ellipse cx="4.2" cy="8" rx="3.6" ry="9" fill="#a5dcd8"/></svg>
<div style="left:0px;top:996px;width:1868px;height:41px;background:#3c3f41;"></div>
<div style="left:0px;top:996px;width:1868px;height:1px;background:#323232;"></div>
<div style="left:0px;top:1019px;width:1868px;height:1px;background:#474a4c;"></div>
<div style="left:101px;top:997px;width:56px;height:22px;background:#2d2f30;"></div>
<svg style="left:0px;top:1002px;" width="4" height="13" viewBox="0 0 4 13"><path d="M-2 2L2 6L-2 10" fill="none" stroke="#afb1b3" stroke-width="1.4"/></svg>
<span style="left:8px;top:999.4px;height:20px;line-height:20px;font-size:13px;color:#bbbbbb;letter-spacing:-0.526px;">Version Control</span>
<svg style="left:112px;top:1003px;" width="8" height="11" viewBox="0 0 8 11"><path d="M0.3 0.5L7.6 5.5L0.3 10.5Z" fill="#afb1b3"/></svg>
<span style="left:127px;top:999.4px;height:20px;line-height:20px;font-size:13px;color:#dfdfdf;letter-spacing:-1.120px;">Run</span>
<svg style="left:168px;top:1003px;" width="12" height="11" viewBox="0 0 12 11"><path d="M0.6 1.7H2.6M0.6 5.3H2.6M0.6 8.8H2.6M4 1.7H11M4 5.3H11M4 8.8H11" stroke="#afb1b3" stroke-width="1.7"/></svg>
<span style="left:184px;top:999.4px;height:20px;line-height:20px;font-size:13px;color:#bbbbbb;letter-spacing:-1.332px;">TODO</span>
<svg style="left:237px;top:1003px;" width="11" height="11" viewBox="0 0 11 11"><circle cx="5.5" cy="5.5" r="5.3" fill="#afb1b3"/><path d="M5.5 2.4V6.4M5.5 7.6V9" stroke="#3c3f41" stroke-width="1.5"/></svg>
<span style="left:253px;top:999.4px;height:20px;line-height:20px;font-size:13px;color:#bbbbbb;letter-spacing:-0.678px;">Problems</span>
<svg style="left:324px;top:1003px;" width="11" height="11" viewBox="0 0 11 11"><rect x="0" y="0" width="11" height="11" fill="#afb1b3"/><path d="M2 2.5L5 5L2 7.5M5.5 8.5H9" fill="none" stroke="#3c3f41" stroke-width="1.3"/></svg>
<span style="left:340px;top:999.4px;height:20px;line-height:20px;font-size:13px;color:#bbbbbb;letter-spacing:-0.516px;">Terminal</span>
<svg style="left:405px;top:1002px;" width="13" height="13" viewBox="0 0 13 13"><circle cx="5.5" cy="6" r="4.6" fill="none" stroke="#afb1b3" stroke-width="1.4"/><path d="M5.5 3.4V6.3H7.6" fill="none" stroke="#afb1b3" stroke-width="1.2"/><rect x="6.5" y="6.5" width="7" height="7" fill="#3c3f41"/><path d="M7.5 7L12.7 10L7.5 13Z" fill="#afb1b3"/></svg>
<span style="left:423px;top:999.4px;height:20px;line-height:20px;font-size:13px;color:#bbbbbb;letter-spacing:-0.336px;">Profiler</span>
<svg style="left:483px;top:1001px;" width="15" height="14" viewBox="0 0 15 14"><circle cx="6.5" cy="8" r="6" fill="#10108c"/><circle cx="12.3" cy="2.2" r="1.9" fill="#10108c"/><circle cx="9" cy="5.5" r="1.6" fill="#ffffff"/><text x="6" y="11.3" font-size="5.5" fill="#fff" text-anchor="middle" font-family="Liberation Sans">Lua</text></svg>
<span style="left:502px;top:999.4px;height:20px;line-height:20px;font-size:13px;color:#bbbbbb;letter-spacing:-0.943px;">LuaCheck</span>
<svg style="left:573.5px;top:1002.5px;" width="13" height="13" viewBox="0 0 13 13"><path d="M3.4 0.8H9.6L12.7 6.2L9.6 11.6H3.4L0.3 6.2Z" fill="#afb1b3"/><path d="M4.8 3.3L9.6 6.2L4.8 9.1Z" fill="#3c3f41"/></svg>
<span style="left:591px;top:999.4px;height:20px;line-height:20px;font-size:13px;color:#bbbbbb;letter-spacing:-0.982px;">Services</span>
<svg style="left:652px;top:1001.5px;" width="14" height="14" viewBox="0 0 14 14"><path d="M0.6 5L5.6 0.8L7.4 1.2L6.8 2.4L3 6.6Z" fill="#afb1b3"/><path d="M3.8 5.6L5.8 3.8L12.6 10.8L10.4 12.8Z" fill="#afb1b3"/></svg>
<span style="left:669px;top:999.4px;height:20px;line-height:20px;font-size:13px;color:#bbbbbb;letter-spacing:-0.384px;">Build</span>
<span style="left:-3px;top:1020.3px;height:20px;line-height:20px;font-size:13px;color:#bbbbbb;letter-spacing:0.122px;">Key Promoter X: Want to create a shortcut for Split Right? // Split Right // Suppress Alert for this Shortcut (moments ago)</span>
<svg style="left:1536px;top:1022px;" width="18" height="15" viewBox="0 0 18 15"><path d="M3 7.5C1.5 8.5 0.8 10 0.8 12C2 14 6 15.6 9 15.6C12 15.6 16 14 17.2 12C17.2 10 16.5 8.5 15 7.5Z" fill="#eaeaea"/><circle cx="6.1" cy="4.4" r="2.9" fill="#303234" stroke="#eaeaea" stroke-width="1.7"/><circle cx="11.9" cy="4.4" r="2.9" fill="#303234" stroke="#eaeaea" stroke-width="1.7"/><rect x="4.2" y="8.4" width="9.6" height="4.8" rx="1" fill="#2c2e30"/><path d="M7.2 9.6V12.6M10.8 9.6V12.6" stroke="#eaeaea" stroke-width="1.4"/></svg>
<svg style="left:1564px;top:1022px;" width="14" height="14" viewBox="0 0 14 14"><path d="M7 7H13.3" stroke="#4285f4" stroke-width="2.4"/><path d="M12.2 3.2A6 6 0 0 0 2.3 3.5" fill="none" stroke="#ea4335" stroke-width="2.4"/><path d="M2.3 3.5A6 6 0 0 0 2.3 10.5" fill="none" stroke="#fbbc05" stroke-width="2.4"/><path d="M2.3 10.5A6 6 0 0 0 11.5 11.2" fill="none" stroke="#34a853" stroke-width="2.4"/><path d="M11.5 11.2A6 6 0 0 0 13.2 7" fill="none" stroke="#4285f4" stroke-width="2.4"/></svg>
<span style="left:1589px;top:1020.3px;height:20px;line-height:20px;font-size:13px;color:#bbbbbb;letter-spacing:-0.309px;">29:28</span>
<span style="left:1632px;top:1020.3px;height:20px;line-height:20px;font-size:13px;color:#bbbbbb;letter-spacing:-1.363px;">CRLF</span>
<span style="left:1672px;top:1020.3px;height:20px;line-height:20px;font-size:13px;color:#bbbbbb;letter-spacing:-0.569px;">UTF-8</span>
<span style="left:1718px;top:1020.3px;height:20px;line-height:20px;font-size:13px;color:#bbbbbb;letter-spacing:-0.131px;">4 spaces</span>
<div style="left:1775px;top:1021px;width:60px;height:16px;background:#4a4d4f;"></div>
<span style="left:1782px;top:1020.3px;height:20px;line-height:20px;font-size:13px;color:#bbbbbb;letter-spacing:0.124px;">634 of 4096M</span>
<div style="left:1504px;top:910px;width:340px;height:76px;background:#4e5052;border-radius:6px;box-shadow:0 2px 6px rgba(0,0,0,0.35);border:1px solid #565a5c;box-sizing:border-box"></div>
<svg style="left:1514px;top:917px;" width="16" height="16" viewBox="0 0 16 16"><circle cx="8" cy="8" r="7.3" fill="#c6c6c6"/><path d="M0 8H16" stroke="#4e5052" stroke-width="1.4"/><path d="M5 4L11 12M11 4L5 12" stroke="#4e5052" stroke-width="4.2"/><path d="M5.2 4.2L10.8 11.8M10.8 4.2L5.2 11.8" stroke="#3ea6dc" stroke-width="2"/></svg>
<span style="left:1536px;top:915.6px;height:20px;line-height:20px;font-size:13px;color:#dddddd;font-weight:700;letter-spacing:-0.039px;">Key Promoter X</span>
<span style="left:1536px;top:935.6px;height:20px;line-height:20px;font-size:13px;color:#c8c8c8;letter-spacing:0.116px;">Want to create a shortcut for Split Right?</span>
<span style="left:1536px;top:959.6px;height:20px;line-height:20px;font-size:13px;color:#589df6;letter-spacing:0.023px;">Split Right</span>
<span style="left:1610.5px;top:959.6px;height:20px;line-height:20px;font-size:13px;color:#589df6;letter-spacing:0.119px;">Suppress Alert for this Shortcut</span>
<div style="left:1731px;top:983px;width:110px;height:42px;background:#1e222c;border-radius:21px;border:1px solid #3a3f4b;box-sizing:border-box"></div>
<div style="left:1791.2px;top:973.4px;width:58px;height:58px;border-radius:50%;background:conic-gradient(from 0deg,#2ec4b6 0deg,#3ddc97 80deg,#d9d24a 170deg,#d9d24a 200deg,#2f3442 202deg,#2f3442 360deg);"></div>
<div style="left:1793.2px;top:975.4px;width:54px;height:54px;border-radius:50%;background:#353a48;"></div>
<span style="left:1802.5px;top:986.0px;height:34px;line-height:34px;font-size:30px;color:#f0f0f0;transform-origin:0 50%;transform:scaleX(0.8);">55</span>
<span style="left:1830.3px;top:1003.4px;height:12px;line-height:12px;font-size:10px;color:#f0f0f0;">%</span>
<svg style="left:1742px;top:990px;" width="8" height="8" viewBox="0 0 8 8"><path d="M4 7.5V1.5M1 4.2L4 1.2L7 4.2" fill="none" stroke="#36a9e1" stroke-width="1.5"/></svg>
<svg style="left:1742px;top:1010px;" width="8" height="8" viewBox="0 0 8 8"><path d="M4 0.5V6.5M1 3.8L4 6.8L7 3.8" fill="none" stroke="#2db84d" stroke-width="1.5"/></svg>
<span style="left:1755px;top:986.5px;height:14px;line-height:14px;font-size:11px;color:#f0f0f0;letter-spacing:-0.099px;">2.1</span>
<span style="left:1770.5px;top:988.5px;height:12px;line-height:12px;font-size:9px;color:#c0c4cc;letter-spacing:0.661px;">K/s</span>
<span style="left:1755px;top:1007.5px;height:14px;line-height:14px;font-size:11px;color:#f0f0f0;letter-spacing:-0.099px;">0.2</span>
<span style="left:1770.5px;top:1009.5px;height:12px;line-height:12px;font-size:9px;color:#c0c4cc;letter-spacing:0.661px;">K/s</span>
</div></body></html>
